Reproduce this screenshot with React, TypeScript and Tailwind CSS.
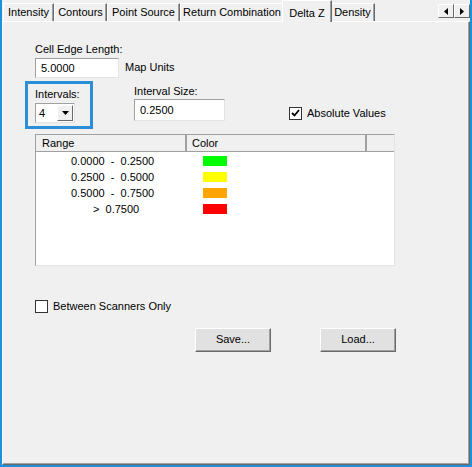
import React from 'react';

const tabs = [
  { label: 'Intensity', w: 51 },
  { label: 'Contours', w: 53 },
  { label: 'Point Source', w: 73 },
  { label: 'Return Combination', w: 104 },
  { label: 'Delta Z', w: 50, active: true },
  { label: 'Density', w: 45 },
];

const ranges = [
  { text: '0.0000  -  0.2500', color: 'bg-[#00ff00]', indent: 'pl-[35px]' },
  { text: '0.2500  -  0.5000', color: 'bg-[#ffff00]', indent: 'pl-[35px]' },
  { text: '0.5000  -  0.7500', color: 'bg-[#ffa500]', indent: 'pl-[35px]' },
  { text: '>  0.7500', color: 'bg-[#ff0000]', indent: 'pl-[57px]' },
];

const Tab: React.FC<{ label: string; w: number; active?: boolean }> = ({ label, w, active }) => (
  <div
    style={{ width: w }}
    className={
      active
        ? 'relative z-10 -mx-[2px] h-[22px] -mb-px bg-[#f0f0f0] border-l border-t border-white border-r border-r-[#696969] shadow-[inset_-1px_0_0_#a0a0a0] flex items-start justify-center pt-[4px]'
        : 'h-[18px] bg-[#f0f0f0] border-l border-t border-white border-r border-r-[#696969] shadow-[inset_-1px_0_0_#a0a0a0] flex items-center justify-center'
    }
  >
    <span className="whitespace-pre">{label}</span>
  </div>
);

const Sunken: React.FC<{ className?: string; children?: React.ReactNode }> = ({ className, children }) => (
  <div className={`bg-white border border-t-[#a0a0a0] border-l-[#a0a0a0] border-b-[#e3e3e3] border-r-[#e3e3e3] ${className ?? ''}`}>
    {children}
  </div>
);

const Button: React.FC<{ label: string }> = ({ label }) => (
  <button className="w-[76px] h-[24px] bg-[#e1e1e1] border border-t-white border-l-white border-b-[#696969] border-r-[#696969] shadow-[inset_-1px_-1px_0_#a0a0a0] flex items-center justify-center">
    {label}
  </button>
);

export default function App() {
  return (
    <div
      className="w-[472px] h-[467px] bg-[#f0f0f0] border-l-2 border-r-2 border-b-2 border-[#1e8fd9] text-[11px] text-black flex flex-col"
      style={{ fontFamily: '"Liberation Sans", Arial, sans-serif' }}
    >
      {/* tab strip */}
      <div className="h-[21px] flex items-end pl-[1px] relative">
        {tabs.map((t) => (
          <Tab key={t.label} {...t} />
        ))}
        <div className="ml-auto mb-[3px] flex">
          <div className="w-[16px] h-[14px] bg-[#f0f0f0] border border-t-white border-l-white border-b-[#696969] border-r-[#696969] flex items-center justify-center">
            <svg width="4" height="7" viewBox="0 0 4 7"><path d="M4 0 L0 3.5 L4 7 Z" fill="#000" /></svg>
          </div>
          <div className="w-[16px] h-[14px] bg-[#f0f0f0] border border-t-white border-l-white border-b-[#696969] border-r-[#696969] flex items-center justify-center">
            <svg width="4" height="7" viewBox="0 0 4 7"><path d="M0 0 L4 3.5 L0 7 Z" fill="#000" /></svg>
          </div>
        </div>
      </div>

      {/* tab panel */}
      <div className="flex-1 border-l border-t border-white border-r border-b border-r-[#696969] border-b-[#696969] shadow-[inset_-1px_-1px_0_#a0a0a0] flex flex-col">
        <div className="pl-[32px] pt-[20px]">
          <div className="leading-[14px]">Cell Edge Length:</div>
          <div className="flex items-center mt-[2px]">
            <Sunken className="w-[84px] h-[20px] flex items-center pl-[5px]">5.0000</Sunken>
            <span className="ml-[6px] -mt-[1px]">Map Units</span>
          </div>
        </div>

        <div className="flex items-start mt-[3px] pl-[22px]">
          <div className="w-[68px] h-[48px] border-[3px] border-[#2c8ed6] pl-[7px] pt-[3px]">
            <div className="leading-[14px]">Intervals:</div>
            <div className="mt-[2px] w-[40px] h-[20px] bg-white border border-t-[#a0a0a0] border-l-[#a0a0a0] border-b-[#e3e3e3] border-r-[#e3e3e3] flex items-center">
              <span className="pl-[3px] flex-1">4</span>
              <div className="w-[16px] h-[16px] mr-[1px] bg-[#f0f0f0] border border-t-white border-l-white border-b-[#696969] border-r-[#696969] flex items-center justify-center">
                <svg width="7" height="4" viewBox="0 0 7 4"><path d="M0 0 L7 0 L3.5 4 Z" fill="#000" /></svg>
              </div>
            </div>
          </div>

          <div className="ml-[41px] pt-[3px]">
            <div className="leading-[14px]">Interval Size:</div>
            <Sunken className="mt-[1px] w-[91px] h-[22px] flex items-center pl-[5px]">0.2500</Sunken>
          </div>

          <div className="ml-[64px] mt-[24px] flex items-center">
            <div className="w-[13px] h-[13px] bg-white border border-[#333] flex items-center justify-center">
              <svg width="9" height="8" viewBox="0 0 9 8">
                <path d="M1 4 L3.5 6.5 L8 1" stroke="#000" strokeWidth="1.8" fill="none" />
              </svg>
            </div>
            <span className="ml-[5px]">Absolute Values</span>
          </div>
        </div>

        {/* list view */}
        <div className="ml-[32px] mt-[5px] w-[360px] h-[132px] bg-white border border-t-[#a0a0a0] border-l-[#a0a0a0] border-b-[#e3e3e3] border-r-[#e3e3e3] flex flex-col">
          <div className="h-[17px] flex bg-[#f0f0f0] shrink-0">
            <div className="w-[151px] border-r-2 border-r-[#a0a0a0] border-b border-b-[#a0a0a0] pl-[6px] leading-[16px]">Range</div>
            <div className="w-[180px] border-r-2 border-r-[#a0a0a0] border-b border-b-[#a0a0a0] pl-[5px] leading-[16px]">Color</div>
            <div className="flex-1 border-b border-b-[#a0a0a0]" />
          </div>
          <div className="pt-[1px]">
            {ranges.map((r) => (
              <div key={r.text} className="h-[16px] flex items-center">
                <div className={`w-[151px] ${r.indent} whitespace-pre`}>{r.text}</div>
                <div className={`ml-[16px] w-[24px] h-[10px] ${r.color}`} />
              </div>
            ))}
          </div>
        </div>

        <div className="ml-[32px] mt-[32px] flex items-center">
          <div className="w-[13px] h-[13px] bg-white border border-[#333]" />
          <span className="ml-[5px]">Between Scanners Only</span>
        </div>

        <div className="flex mt-[13px] pl-[192px] gap-[49px]">
          <Button label="Save..." />
          <Button label="Load..." />
        </div>
      </div>
    </div>
  );
}
